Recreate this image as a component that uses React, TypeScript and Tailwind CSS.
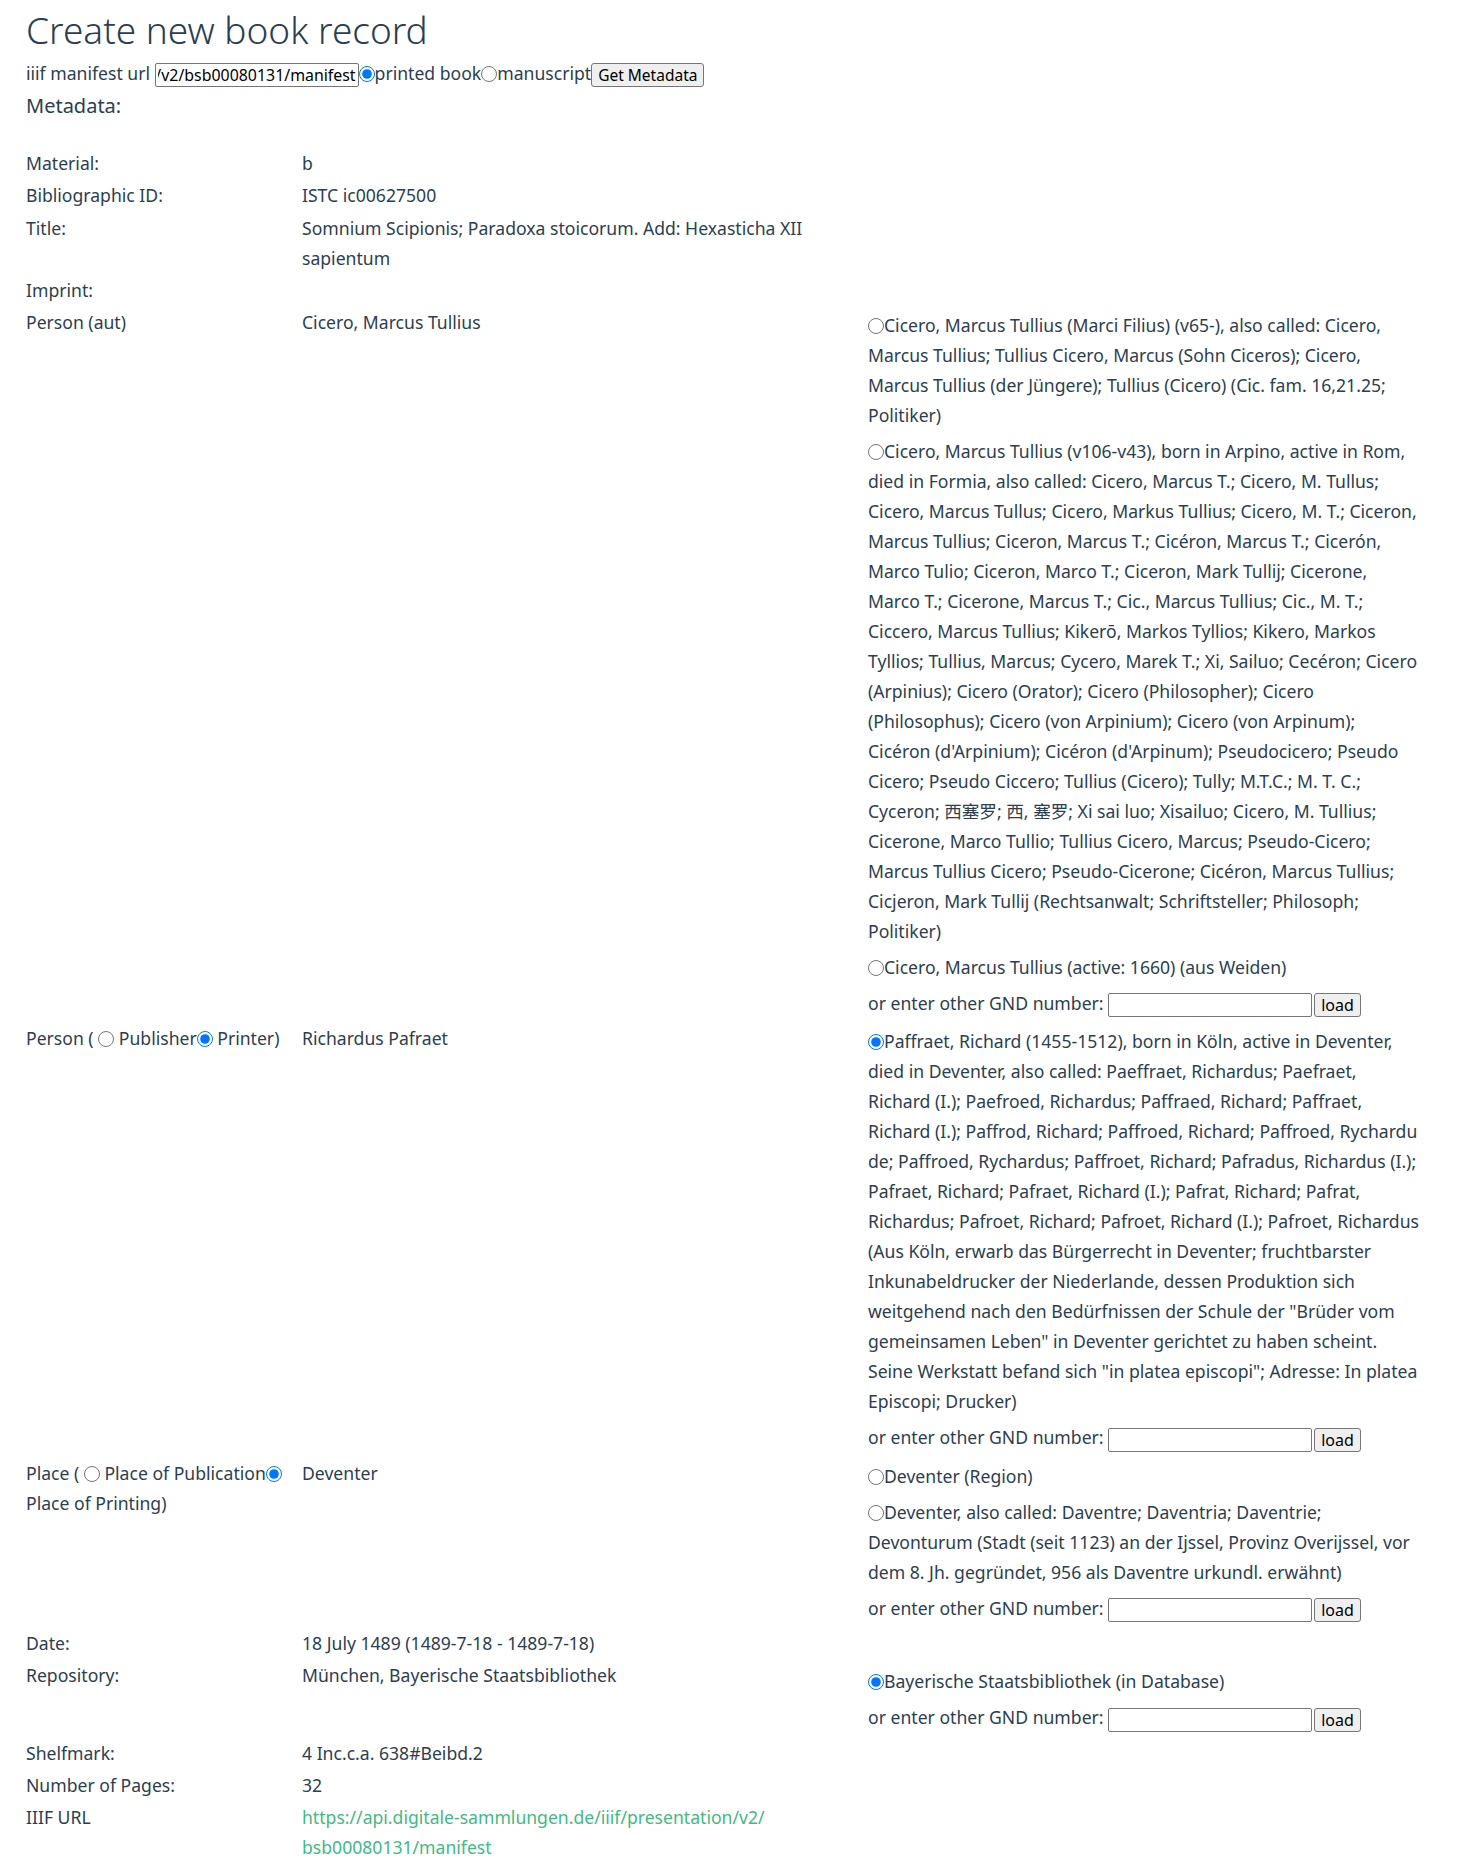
import { useEffect, useRef } from "react";
import type { ReactNode } from "react";

const personAut = [
  "Cicero, Marcus Tullius (Marci Filius) (v65-), also called: Cicero, Marcus Tullius; Tullius Cicero, Marcus (Sohn Ciceros); Cicero, Marcus Tullius (der Jüngere); Tullius (Cicero) (Cic. fam. 16,21.25; Politiker)",
  "Cicero, Marcus Tullius (v106-v43), born in Arpino, active in Rom, died in Formia, also called: Cicero, Marcus T.; Cicero, M. Tullus; Cicero, Marcus Tullus; Cicero, Markus Tullius; Cicero, M. T.; Ciceron, Marcus Tullius; Ciceron, Marcus T.; Cicéron, Marcus T.; Cicerón, Marco Tulio; Ciceron, Marco T.; Ciceron, Mark Tullij; Cicerone, Marco T.; Cicerone, Marcus T.; Cic., Marcus Tullius; Cic., M. T.; Ciccero, Marcus Tullius; Kikerō, Markos Tyllios; Kikero, Markos Tyllios; Tullius, Marcus; Cycero, Marek T.; Xi, Sailuo; Cecéron; Cicero (Arpinius); Cicero (Orator); Cicero (Philosopher); Cicero (Philosophus); Cicero (von Arpinium); Cicero (von Arpinum); Cicéron (d'Arpinium); Cicéron (d'Arpinum); Pseudocicero; Pseudo Cicero; Pseudo Ciccero; Tullius (Cicero); Tully; M.T.C.; M. T. C.; Cyceron; 西塞罗; 西, 塞罗; Xi sai luo; Xisailuo; Cicero, M. Tullius; Cicerone, Marco Tullio; Tullius Cicero, Marcus; Pseudo-Cicero; Marcus Tullius Cicero; Pseudo-Cicerone; Cicéron, Marcus Tullius; Cicjeron, Mark Tullij (Rechtsanwalt; Schriftsteller; Philosoph; Politiker)",
  "Cicero, Marcus Tullius (active: 1660) (aus Weiden)",
];

const printer =
  'Paffraet, Richard (1455-1512), born in Köln, active in Deventer, died in Deventer, also called: Paeffraet, Richardus; Paefraet, Richard (I.); Paefroed, Richardus; Paffraed, Richard; Paffraet, Richard (I.); Paffrod, Richard; Paffroed, Richard; Paffroed, Rychardu de; Paffroed, Rychardus; Paffroet, Richard; Pafradus, Richardus (I.); Pafraet, Richard; Pafraet, Richard (I.); Pafrat, Richard; Pafrat, Richardus; Pafroet, Richard; Pafroet, Richard (I.); Pafroet, Richardus (Aus Köln, erwarb das Bürgerrecht in Deventer; fruchtbarster Inkunabeldrucker der Niederlande, dessen Produktion sich weitgehend nach den Bedürfnissen der Schule der "Brüder vom gemeinsamen Leben" in Deventer gerichtet zu haben scheint. Seine Werkstatt befand sich "in platea episcopi"; Adresse: In platea Episcopi; Drucker)';

const places = [
  "Deventer (Region)",
  "Deventer, also called: Daventre; Daventria; Daventrie; Devonturum (Stadt (seit 1123) an der Ijssel, Provinz Overijssel, vor dem 8. Jh. gegründet, 956 als Daventre urkundl. erwähnt)",
];

function Radio({ name, checked }: { name: string; checked?: boolean }) {
  return (
    <input
      type="radio"
      name={name}
      defaultChecked={checked}
      className="m-0 h-[16px] w-[16px] align-[-2px]"
    />
  );
}

function Option({ name, checked, children }: { name: string; checked?: boolean; children: ReactNode }) {
  return (
    <div className="py-[3px]">
      <Radio name={name} checked={checked} />
      {children}
    </div>
  );
}

function GndRow() {
  return (
    <div className="py-[3px]">
      or enter other GND number:{" "}
      <input
        type="text"
        className="h-[24px] w-[204px] rounded-[2px] border border-[#767676] bg-white px-[2px] align-middle text-[16px] text-black"
      />
      <button className="ml-[2px] h-[24px] rounded-[3px] border border-[#767676] bg-[#efefef] px-[6px] align-middle text-[16px] leading-none text-black">
        load
      </button>
    </div>
  );
}

function Row({ label, value, right }: { label: ReactNode; value?: ReactNode; right?: ReactNode }) {
  return (
    <>
      <div>{label}</div>
      <div>{value}</div>
      <div>{right}</div>
    </>
  );
}

export default function App() {
  const urlRef = useRef<HTMLInputElement>(null);

  useEffect(() => {
    if (urlRef.current) urlRef.current.scrollLeft = urlRef.current.scrollWidth;
  }, []);

  return (
    <div className="min-h-screen bg-white px-[26px] font-['Noto_Sans','Noto_Sans_CJK_SC',sans-serif] text-[17.6px] leading-[30px] text-[#2c3e50]">
      <h1 className="pt-[8px] text-[37px] leading-[44px] font-light">Create new book record</h1>

      <div className="mt-[6px] leading-[30px]">
        iiif manifest url{" "}
        <input
          ref={urlRef}
          type="text"
          defaultValue="https://api.digitale-sammlungen.de/iiif/presentation/v2/bsb00080131/manifest"
          className="h-[24px] w-[204px] rounded-[2px] border border-[#767676] bg-white px-[2px] align-middle text-[15.9px] text-black"
        />
        <Radio name="kind" checked />
        printed book
        <Radio name="kind" />
        manuscript
        <button className="h-[24px] rounded-[3px] border border-[#767676] bg-[#efefef] px-[6px] align-middle text-[15.5px] leading-none text-black">
          Get Metadata
        </button>
      </div>

      <div className="mt-[3px] text-[20px] leading-[30px]">Metadata:</div>

      <div className="mt-[27px] grid grid-cols-[274px_564px_552px] gap-x-[2px] gap-y-[2.3px]">
        <Row label="Material:" value="b" />
        <Row label="Bibliographic ID:" value="ISTC ic00627500" />
        <Row label="Title:" value="Somnium Scipionis; Paradoxa stoicorum. Add: Hexasticha XII sapientum" />
        <Row label="Imprint:" />
        <Row
          label="Person (aut)"
          value="Cicero, Marcus Tullius"
          right={
            <>
              {personAut.map((p) => (
                <Option key={p} name="aut">
                  {p}
                </Option>
              ))}
              <GndRow />
            </>
          }
        />
        <Row
          label={
            <>
              Person ( <Radio name="role" /> Publisher
              <Radio name="role" checked /> Printer)
            </>
          }
          value="Richardus Pafraet"
          right={
            <>
              <Option name="printer" checked>
                {printer}
              </Option>
              <GndRow />
            </>
          }
        />
        <Row
          label={
            <>
              Place ( <Radio name="placetype" /> Place of Publication
              <Radio name="placetype" checked /> Place of Printing)
            </>
          }
          value="Deventer"
          right={
            <>
              {places.map((p) => (
                <Option key={p} name="place">
                  {p}
                </Option>
              ))}
              <GndRow />
            </>
          }
        />
        <Row label="Date:" value="18 July 1489 (1489-7-18 - 1489-7-18)" />
        <Row
          label="Repository:"
          value="München, Bayerische Staatsbibliothek"
          right={
            <div className="pt-[3px]">
              <Option name="repo" checked>
                Bayerische Staatsbibliothek (in Database)
              </Option>
              <GndRow />
            </div>
          }
        />
        <Row label="Shelfmark:" value="4 Inc.c.a. 638#Beibd.2" />
        <Row label="Number of Pages:" value="32" />
        <Row
          label="IIIF URL"
          value={
            <a href="#" className="text-[#42b983]">
              https://api.digitale-sammlungen.de/iiif/presentation/v2/
              <wbr />
              bsb00080131/manifest
            </a>
          }
        />
      </div>
    </div>
  );
}
